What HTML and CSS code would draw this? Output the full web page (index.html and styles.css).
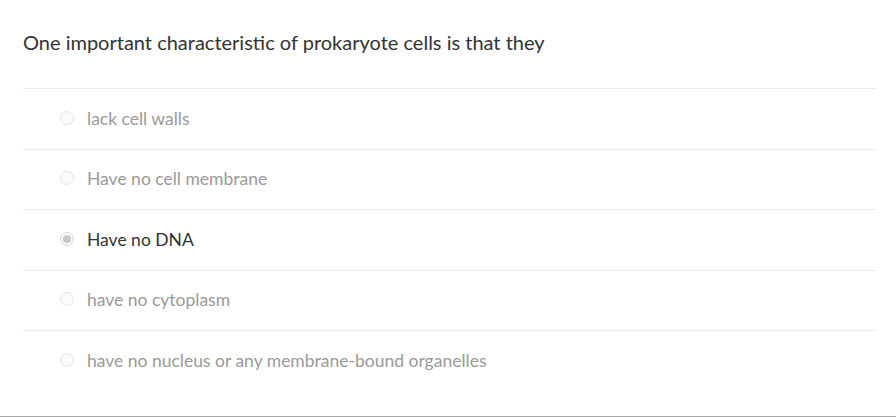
FILE: index.html
```html
<!DOCTYPE html>
<html>
<head>
<meta charset="utf-8">
<link rel="stylesheet" href="styles.css">
</head>
<body>
<div class="page">
  <div class="question">
    <p class="question-text">One important characteristic of prokaryote cells is that they</p>
    <div class="answers">
      <label class="answer">
        <span class="radio"></span>
        <span class="answer-text">lack cell walls</span>
      </label>
      <label class="answer">
        <span class="radio"></span>
        <span class="answer-text">Have no cell membrane</span>
      </label>
      <label class="answer selected">
        <span class="radio"><span class="dot"></span></span>
        <span class="answer-text">Have no DNA</span>
      </label>
      <label class="answer">
        <span class="radio"></span>
        <span class="answer-text">have no cytoplasm</span>
      </label>
      <label class="answer">
        <span class="radio"></span>
        <span class="answer-text">have no nucleus or any membrane-bound organelles</span>
      </label>
    </div>
  </div>
</div>
</body>
</html>
```
FILE: styles.css
```css
html, body {
  margin: 0;
  padding: 0;
  background: #ffffff;
}

body {
  font-family: Lato, "Liberation Sans", sans-serif;
  width: 896px;
  height: 417px;
  overflow: hidden;
}

.page {
  height: 417px;
  border-bottom: 1px solid #a8a8a8;
  box-sizing: border-box;
}

.question {
  padding: 0 20px 0 23px;
}

.question-text {
  margin: 0;
  padding-top: 29px;
  padding-bottom: 33px;
  font-size: 20px;
  line-height: 26px;
  color: #333333;
}

.answers {
  display: flex;
  flex-direction: column;
}

.answer {
  display: flex;
  align-items: center;
  height: 60.5px;
  box-sizing: border-box;
  border-top: 1px solid #ebebeb;
  padding-left: 37px;
  gap: 13px;
  font-size: 17.5px;
  color: #9a9a9a;
}

.answer.selected {
  color: #333333;
}

.radio {
  width: 14px;
  height: 14px;
  border-radius: 50%;
  border: 1px solid #e4e4e4;
  box-sizing: border-box;
  background: #fbfbfb;
  display: flex;
  align-items: center;
  justify-content: center;
  margin-top: -2px;
}

.selected .radio {
  border-color: #d6d6d6;
}

.dot {
  width: 8px;
  height: 8px;
  border-radius: 50%;
  background: #c8c8c8;
}

.answer-text {
  line-height: 22px;
}
```
